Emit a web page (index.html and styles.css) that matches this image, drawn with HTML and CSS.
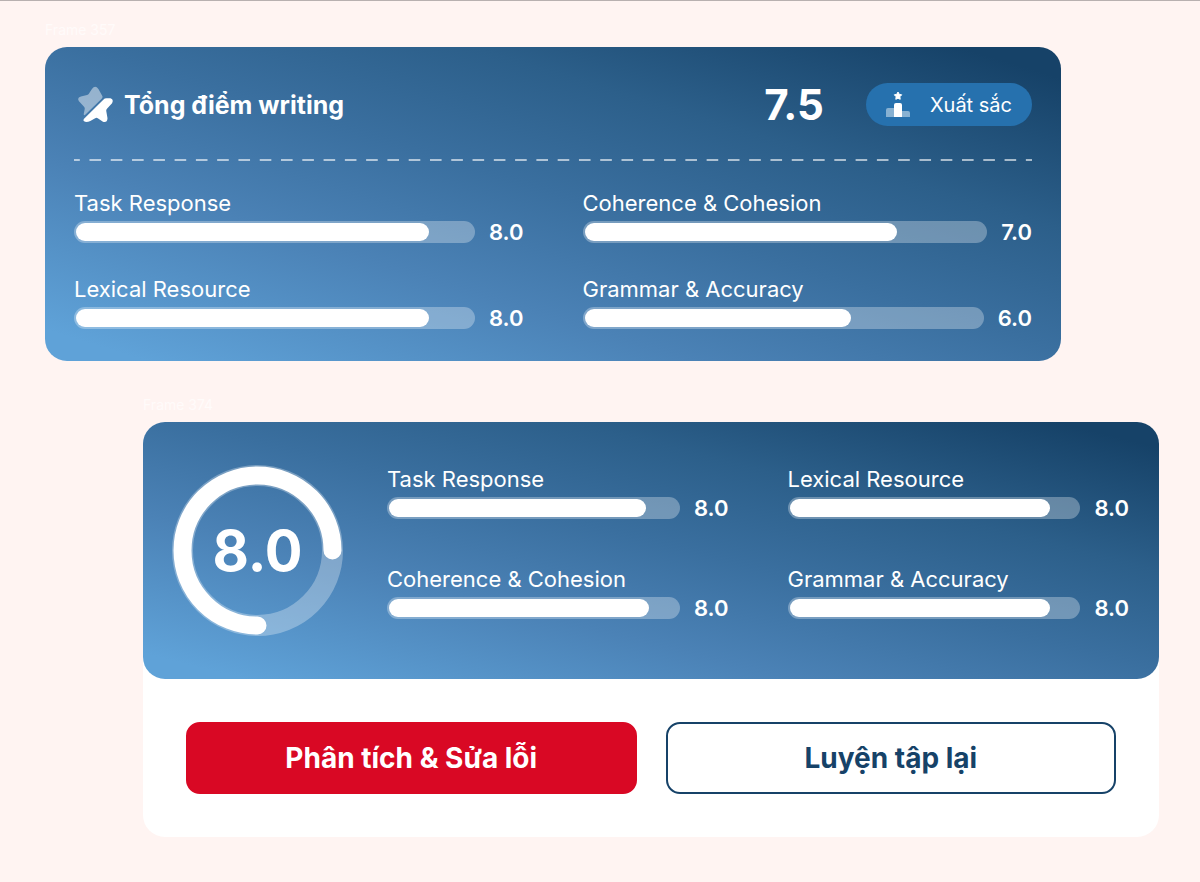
FILE: index.html
```html
<!DOCTYPE html>
<html lang="vi">
<head>
  <meta charset="UTF-8">
  <meta name="viewport" content="width=device-width, initial-scale=1.0">
  <title>Tổng điểm writing</title>
  <link rel="stylesheet" href="styles.css">
</head>
<body>
  <main class="board">

    <section class="frame frame-summary">
      <p class="frame-name">Frame 357</p>
      <div class="score-card">
        <header class="summary-header">
          <svg class="star-icon" viewBox="20 15 112 114" aria-hidden="true">
            <path fill="#fff" fill-opacity=".45" d="M65 24Q75 10 85 24L97 46Q99 50 95 54L46 102Q39 109 40 100L43 85Q43 81 40 78L25 62Q18 50 31 47L50 43Q54 42 56 38Z"/>
            <path fill="#fff" d="M100 57Q104 53 110 53L122 53Q133 57 127 68L112 84Q109 87 109 91L113 114Q112 129 99 125L83 114Q79 111 75 114L60 123Q54 126 47 126Q36 125 40 117Z"/>
          </svg>
          <h1 class="summary-title">Tổng điểm writing</h1>
          <strong class="summary-score">7.5</strong>
          <span class="badge">
            <svg class="podium-icon" viewBox="0 0 24 27" aria-hidden="true">
              <path fill="#fff" fill-opacity=".45" d="M0 19a2 2 0 0 1 2-2h6v9H0zM16 20h6a2 2 0 0 1 2 2v4h-8z"/>
              <path fill="#fff" d="M8 14a2 2 0 0 1 2-2h4a2 2 0 0 1 2 2v12H8z"/>
              <path fill="#fff" stroke="#fff" stroke-linejoin="round" d="M12 1l1.200 2.300 2.500.5-1.800 1.900.3 2.600L12 7.200 9.800 8.300l.3-2.600-1.800-1.900 2.500-.5z"/>
            </svg>
            Xuất sắc
          </span>
        </header>

        <div class="divider"></div>

        <div class="criteria">
          <div class="criterion">
            <span class="criterion-name" id="s-task">Task Response</span>
            <div class="criterion-row">
              <div class="bar" role="meter" aria-labelledby="s-task" aria-valuemin="0" aria-valuemax="9" aria-valuenow="8"><div class="bar-fill" style="width: 89%"></div></div>
              <span class="criterion-score">8.0</span>
            </div>
          </div>
          <div class="criterion">
            <span class="criterion-name" id="s-coherence">Coherence &amp; Cohesion</span>
            <div class="criterion-row">
              <div class="bar" role="meter" aria-labelledby="s-coherence" aria-valuemin="0" aria-valuemax="9" aria-valuenow="7"><div class="bar-fill" style="width: 78%"></div></div>
              <span class="criterion-score">7.0</span>
            </div>
          </div>
          <div class="criterion">
            <span class="criterion-name" id="s-lexical">Lexical Resource</span>
            <div class="criterion-row">
              <div class="bar" role="meter" aria-labelledby="s-lexical" aria-valuemin="0" aria-valuemax="9" aria-valuenow="8"><div class="bar-fill" style="width: 89%"></div></div>
              <span class="criterion-score">8.0</span>
            </div>
          </div>
          <div class="criterion">
            <span class="criterion-name" id="s-grammar">Grammar &amp; Accuracy</span>
            <div class="criterion-row">
              <div class="bar" role="meter" aria-labelledby="s-grammar" aria-valuemin="0" aria-valuemax="9" aria-valuenow="6"><div class="bar-fill" style="width: 67%"></div></div>
              <span class="criterion-score">6.0</span>
            </div>
          </div>
        </div>
      </div>
    </section>

    <section class="frame frame-result">
      <p class="frame-name">Frame 374</p>
      <div class="result">
        <div class="score-card result-card">
          <div class="ring">
            <svg class="ring-chart" viewBox="0 0 171 171" aria-hidden="true">
              <circle cx="85.500" cy="85.500" r="75" fill="none" stroke="#fff" stroke-opacity=".3" stroke-width="21"/>
              <path d="M85.500 160.500A75 75 0 1 1 160.500 85.500" fill="none" stroke="#fff" stroke-width="18" stroke-linecap="round"/>
            </svg>
            <strong class="ring-score">8.0</strong>
          </div>

          <div class="criteria">
            <div class="criterion">
              <span class="criterion-name" id="r-task">Task Response</span>
              <div class="criterion-row">
                <div class="bar" role="meter" aria-labelledby="r-task" aria-valuemin="0" aria-valuemax="9" aria-valuenow="8"><div class="bar-fill" style="width: 89%"></div></div>
                <span class="criterion-score">8.0</span>
              </div>
            </div>
            <div class="criterion">
              <span class="criterion-name" id="r-lexical">Lexical Resource</span>
              <div class="criterion-row">
                <div class="bar" role="meter" aria-labelledby="r-lexical" aria-valuemin="0" aria-valuemax="9" aria-valuenow="8"><div class="bar-fill" style="width: 90%"></div></div>
                <span class="criterion-score">8.0</span>
              </div>
            </div>
            <div class="criterion">
              <span class="criterion-name" id="r-coherence">Coherence &amp; Cohesion</span>
              <div class="criterion-row">
                <div class="bar" role="meter" aria-labelledby="r-coherence" aria-valuemin="0" aria-valuemax="9" aria-valuenow="8"><div class="bar-fill" style="width: 90%"></div></div>
                <span class="criterion-score">8.0</span>
              </div>
            </div>
            <div class="criterion">
              <span class="criterion-name" id="r-grammar">Grammar &amp; Accuracy</span>
              <div class="criterion-row">
                <div class="bar" role="meter" aria-labelledby="r-grammar" aria-valuemin="0" aria-valuemax="9" aria-valuenow="8"><div class="bar-fill" style="width: 90%"></div></div>
                <span class="criterion-score">8.0</span>
              </div>
            </div>
          </div>
        </div>

        <div class="actions">
          <button type="button" class="btn btn-primary">Phân tích &amp; Sửa lỗi</button>
          <button type="button" class="btn btn-outline">Luyện tập lại</button>
        </div>
      </div>
    </section>

  </main>
</body>
</html>
```
FILE: styles.css
```css
* {
  box-sizing: border-box;
}

body {
  margin: 0;
  background: #fff4f2;
  border-top: 1px solid #b8b0b0;
  font-family: Inter, "Liberation Sans", sans-serif;
  color: #fff;
}

.board {
  display: flex;
  flex-direction: column;
  gap: 33px;
  padding: 18px 41px 44px 45px;
}

.frame-summary {
  margin-right: 98px;
}

.frame-result {
  margin-left: 98px;
}

.frame-name {
  margin: 0 0 6px;
  font-size: 14px;
  line-height: 22px;
  color: #fffbfa;
}

.score-card {
  padding: 36px 29px 32px;
  border-radius: 22px;
  background: linear-gradient(to top right, #5fa2d8 5%, #4b82b6 32%, #3a6f9f 52%, #2c5f8a 71%, #164268 95%);
}

/* Header */
.summary-header {
  display: flex;
  align-items: center;
}

.star-icon {
  width: 37px;
  height: 37px;
  margin: 0 10px 0 3px;
}

.summary-title {
  flex: 1;
  margin: 0;
  font-size: 25px;
  line-height: 32px;
  font-weight: 700;
}

.summary-score {
  margin-right: 42px;
  font-size: 42px;
  line-height: 43px;
  font-weight: 700;
}

.badge {
  display: flex;
  align-items: center;
  gap: 20px;
  height: 43px;
  padding: 0 20px;
  border-radius: 22px;
  background: #2671ae;
  font-size: 20px;
}

.podium-icon {
  width: 24px;
  height: 27px;
}

.divider {
  height: 2px;
  margin: 33px 0 30px;
  background: linear-gradient(90deg, rgba(255, 255, 255, 0.6) 28%, transparent 28%, transparent 72%, rgba(255, 255, 255, 0.6) 72%);
  background-size: calc(100% / 45) 2px;
}

/* Criteria */
.criteria {
  display: grid;
  grid-template-columns: 1fr 1fr;
  gap: 34px 59px;
}

.criterion-name {
  display: block;
  margin-bottom: 6px;
  font-size: 22px;
  line-height: 24px;
}

.criterion-row {
  display: flex;
  align-items: center;
  gap: 14px;
}

.bar {
  flex: 1;
  height: 22px;
  padding: 2px;
  border-radius: 11px;
  background: rgba(255, 255, 255, 0.3);
}

.bar-fill {
  height: 18px;
  border-radius: 9px;
  background: #fff;
}

.criterion-score {
  font-size: 22px;
  line-height: 22px;
  font-weight: 600;
}

/* Result */
.result {
  border-radius: 22px;
  background: #fff;
}

.result-card {
  display: flex;
  align-items: flex-start;
  gap: 44px;
  padding: 43px 30px 43px 29px;
}

.result-card .criteria {
  flex: 1;
  row-gap: 48px;
  padding-top: 2px;
}

.ring {
  display: grid;
  place-items: center;
}

.ring-chart,
.ring-score {
  grid-area: 1 / 1;
}

.ring-chart {
  width: 171px;
  height: 171px;
}

.ring-score {
  font-size: 56px;
  line-height: 64px;
  font-weight: 700;
}

.actions {
  display: grid;
  grid-template-columns: 1fr 1fr;
  gap: 29px;
  padding: 43px;
}

.btn {
  height: 72px;
  border: 2px solid #164268;
  border-radius: 14px;
  font-family: inherit;
  font-size: 28px;
  font-weight: 700;
  cursor: pointer;
}

.btn-primary {
  border-color: #d90824;
  background: #d90824;
  color: #fff;
}

.btn-outline {
  background: #fff;
  color: #164268;
}
```
